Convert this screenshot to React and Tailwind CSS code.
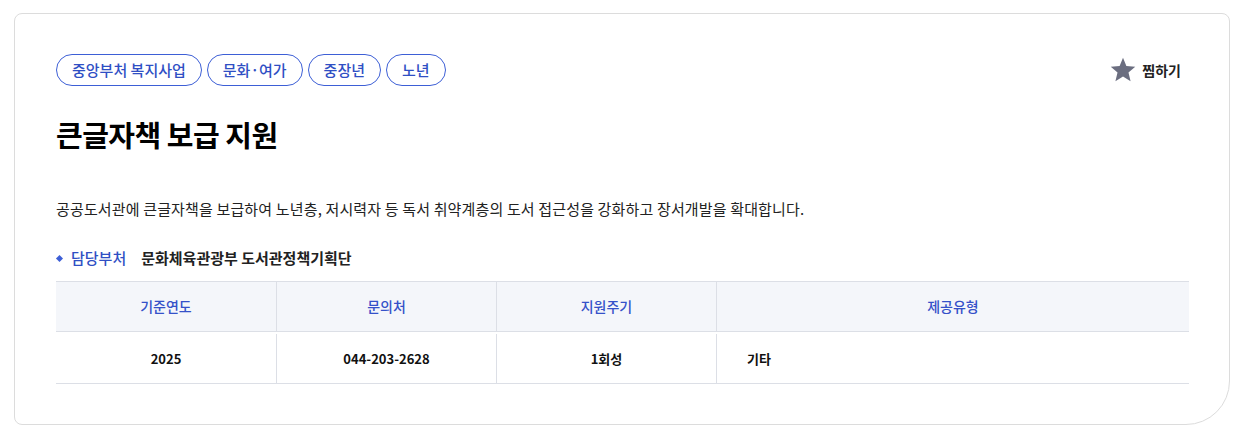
const tags = ['중앙부처 복지사업', '문화·여가', '중장년', '노년'];

const cols = [
  { label: '기준연도', value: '2025', w: 'w-[220px]', align: 'justify-center' },
  { label: '문의처', value: '044-203-2628', w: 'w-[220px]', align: 'justify-center' },
  { label: '지원주기', value: '1회성', w: 'w-[220px]', align: 'justify-center' },
  { label: '제공유형', value: '기타', w: 'flex-1', align: 'justify-start pl-[30px]' },
];

export default function App() {
  return (
    <div
      className="bg-white pt-[13px] pl-[14px] h-[438px]"
      style={{ fontFamily: '"Noto Sans CJK KR", "Noto Sans", sans-serif' }}
    >
      <div className="w-[1216px] h-[412px] border border-[#dcdcdc] rounded-tl-[8px] rounded-tr-[8px] rounded-bl-[8px] rounded-br-[44px] pt-[40px] pl-[41px] pr-[40px]">
        <div className="flex items-center justify-between">
          <div className="flex gap-[5px]">
            {tags.map((t) => (
              <span
                key={t}
                className="h-[32px] px-[15px] flex items-center rounded-full border border-[#3d5fd6] text-[#2f4fc4] text-[15px] font-medium"
              >
                {t}
              </span>
            ))}
          </div>
          <div className="flex items-center gap-[5px] mr-[8px]">
            <svg width="28" height="28" viewBox="0 0 24 24">
              <polygon
                points="12,1.5 14.9,8.6 22.5,9.2 16.7,14.2 18.5,21.6 12,17.6 5.5,21.6 7.3,14.2 1.5,9.2 9.1,8.6"
                fill="#6b6e80"
              />
            </svg>
            <span className="text-[14px] font-bold text-[#222]">찜하기</span>
          </div>
        </div>

        <h1 className="mt-[28px] text-[29px] leading-[40px] font-bold text-black tracking-[-0.5px]">
          큰글자책 보급 지원
        </h1>

        <p className="mt-[44px] text-[15px] leading-[22px] text-[#222] tracking-[0.15px]">
          공공도서관에 큰글자책을 보급하여 노년층, 저시력자 등 독서 취약계층의 도서 접근성을 강화하고 장서개발을 확대합니다.
        </p>

        <div className="mt-[27px] flex items-center text-[15px] leading-[22px]">
          <span className="w-[5px] h-[5px] bg-[#3d5fd6] rotate-45 ml-[1px] mr-[9px]" />
          <span className="text-[#2f4fc4] font-medium mr-[15px]">담당부처</span>
          <span className="font-bold text-[#222]">문화체육관광부 도서관정책기획단</span>
        </div>

        <div className="mt-[12px] border-t border-[#dcdfe6]">
          <div className="flex bg-[#f4f6fa] h-[50px] border-b border-[#dcdfe6]">
            {cols.map((c, i) => (
              <div
                key={c.label}
                className={`${c.w} flex items-center justify-center text-[14px] font-medium text-[#3551c9] ${i > 0 ? 'border-l border-[#dcdfe6]' : ''}`}
              >
                {c.label}
              </div>
            ))}
          </div>
          <div className="flex h-[52px] border-b border-[#dcdfe6] pt-[2px]">
            {cols.map((c, i) => (
              <div
                key={c.label}
                className={`${c.w} flex items-center ${c.align} text-[13px] font-bold text-[#111] ${i > 0 ? 'border-l border-[#dcdfe6]' : ''}`}
              >
                {c.value}
              </div>
            ))}
          </div>
        </div>
      </div>
    </div>
  );
}
